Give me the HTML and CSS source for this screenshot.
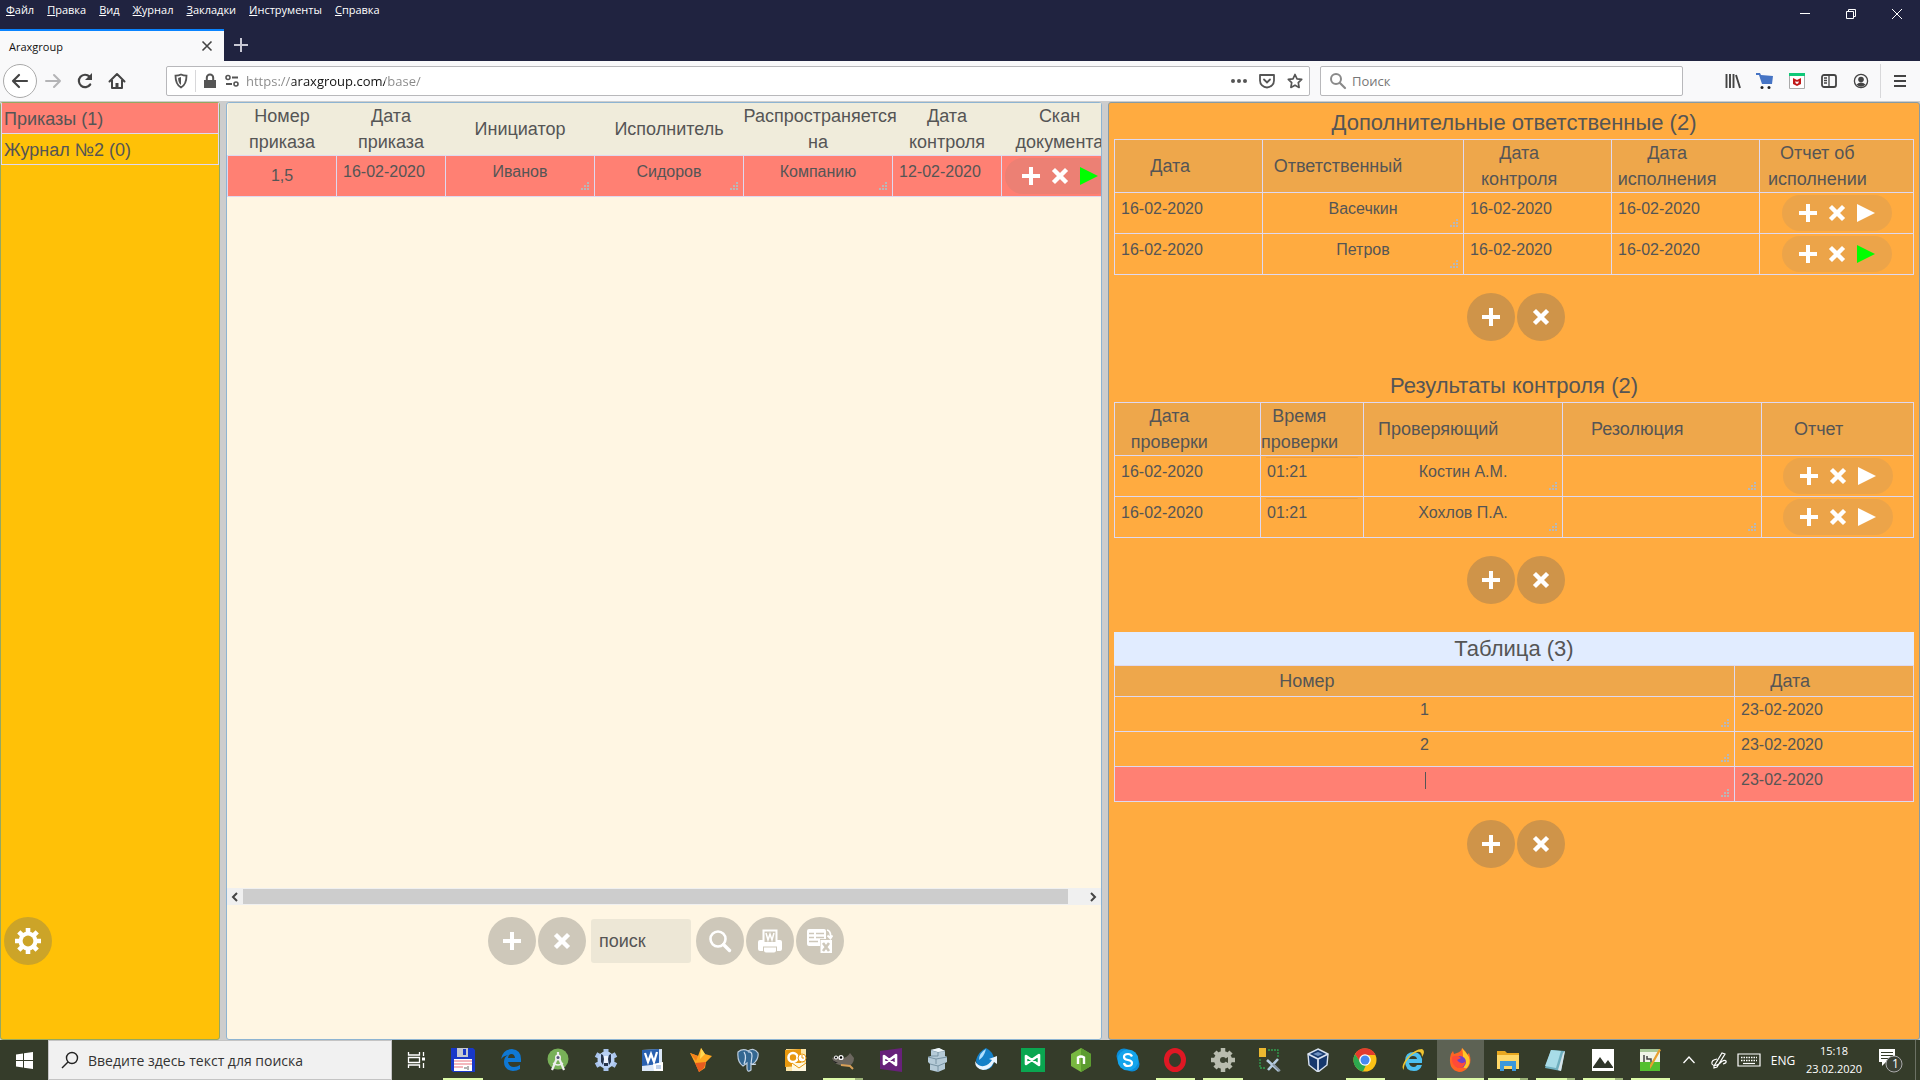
FILE: index.html
```html
<!DOCTYPE html>
<html lang="ru">
<head>
	<meta charset="UTF-8">
	<title>Araxgroup</title>
	<link rel="stylesheet" href="styles.css">
</head>
<body>
	<svg class="defs" aria-hidden="true">
		<symbol id="plus" viewBox="0 0 20 20"><path d="M8 1h4v7h7v4h-7v7H8v-7H1V8h7z" fill="currentColor"/></symbol>
		<symbol id="cross" viewBox="0 0 20 20"><path d="M5 5l10 10M15 5L5 15" stroke="currentColor" stroke-width="4.4" stroke-linecap="square"/></symbol>
		<symbol id="play" viewBox="0 0 20 20"><path d="M1 1l18 9-18 9z" fill="currentColor"/></symbol>
	</svg>

	<header class="browser">
		<div class="titlebar">
			<nav class="menu">
				<a href="#"><u>Ф</u>айл</a>
				<a href="#"><u>П</u>равка</a>
				<a href="#"><u>В</u>ид</a>
				<a href="#"><u>Ж</u>урнал</a>
				<a href="#"><u>З</u>акладки</a>
				<a href="#"><u>И</u>нструменты</a>
				<a href="#"><u>С</u>правка</a>
			</nav>
			<div class="window-buttons">
				<button type="button" aria-label="Свернуть"><svg width="12" height="12" viewBox="0 0 12 12"><path d="M1 5.500h10" stroke="#fff"/></svg></button>
				<button type="button" aria-label="Окно"><svg width="12" height="12" viewBox="0 0 12 12"><path d="M1.500 3.500h7v7h-7zM3.500 3V1.500h7v7H9" fill="none" stroke="#fff"/></svg></button>
				<button type="button" aria-label="Закрыть"><svg width="12" height="12" viewBox="0 0 12 12"><path d="M1 1l10 10M11 1L1 11" stroke="#fff"/></svg></button>
			</div>
		</div>
		<div class="tabs">
			<div class="tab">
				<span>Araxgroup</span>
				<button type="button" aria-label="Закрыть вкладку"><svg width="12" height="12" viewBox="0 0 12 12"><path d="M1.500 1.500l9 9M10.500 1.500l-9 9" stroke="#444" stroke-width="1.600"/></svg></button>
			</div>
			<button type="button" class="new-tab" aria-label="Новая вкладка"><svg width="14" height="14" viewBox="0 0 14 14"><path d="M7 0v14M0 7h14" stroke="#c8c8d4" stroke-width="2"/></svg></button>
		</div>
		<div class="navbar">
			<div class="nav-buttons">
				<button type="button" class="back" aria-label="Назад"><svg width="18" height="18" viewBox="0 0 18 18"><path d="M16 9H2M8 3L2 9l6 6" fill="none" stroke="#444" stroke-width="2.200" stroke-linecap="round" stroke-linejoin="round"/></svg></button>
				<button type="button" aria-label="Вперёд"><svg width="18" height="18" viewBox="0 0 18 18"><path d="M2 9h14M10 3l6 6-6 6" fill="none" stroke="#b4b4b6" stroke-width="2" stroke-linecap="round" stroke-linejoin="round"/></svg></button>
				<button type="button" aria-label="Обновить"><svg width="18" height="18" viewBox="0 0 18 18"><path d="M14.200 12.500A6.200 6.200 0 1 1 13.500 4.600" fill="none" stroke="#444" stroke-width="2.200" stroke-linecap="round"/><path d="M16 1v7H9z" fill="#444"/></svg></button>
				<button type="button" aria-label="Домой"><svg width="18" height="18" viewBox="0 0 18 18"><path d="M1.500 9.500L9 2l7.500 7.500M4 8v8h10V8" fill="none" stroke="#444" stroke-width="2" stroke-linecap="round" stroke-linejoin="round"/><path d="M7.500 11h3v5h-3z" fill="#444"/></svg></button>
			</div>
			<div class="field url">
				<svg width="16" height="16" viewBox="0 0 16 16"><path d="M8 1.500c2 1 4 1.200 5.500 1.200 0 6-1.500 9.500-5.500 11.800C4 12.200 2.500 8.700 2.500 2.700 4 2.700 6 2.500 8 1.500z" fill="none" stroke="#555" stroke-width="1.800"/><path d="M8 4v8C5.800 10.200 5.200 8 5.100 4.900z" fill="#555"/></svg>
				<i class="split"></i>
				<svg width="16" height="16" viewBox="0 0 16 16"><path d="M2 7h12v8H2z" fill="#555"/><path d="M4.800 7V4.800a3.200 3.200 0 0 1 6.400 0V7" fill="none" stroke="#555" stroke-width="2"/></svg>
				<svg width="16" height="16" viewBox="0 0 16 16"><circle cx="4" cy="4.500" r="2" fill="none" stroke="#555" stroke-width="1.600"/><circle cx="12" cy="11" r="2" fill="none" stroke="#555" stroke-width="1.600"/><path d="M8 4.500h6M2 11h6" stroke="#555" stroke-width="1.800"/></svg>
				<input type="text" class="address" aria-label="Адрес" value="https://araxgroup.com/base/">
				<svg width="16" height="16" viewBox="0 0 16 16"><g fill="#555"><circle cx="2" cy="8" r="2"/><circle cx="8" cy="8" r="2"/><circle cx="14" cy="8" r="2"/></g></svg>
				<svg width="16" height="16" viewBox="0 0 16 16"><path d="M1 2h14v5.500a7 7 0 0 1-14 0z" fill="none" stroke="#555" stroke-width="1.800" stroke-linejoin="round"/><path d="M5 6.500l3 3 3-3" fill="none" stroke="#555" stroke-width="1.800" stroke-linecap="round"/></svg>
				<svg width="16" height="16" viewBox="0 0 16 16"><path d="M8 1.500l2 4.300 4.700.6-3.400 3.300.8 4.700L8 12.200l-4.100 2.200.8-4.700L1.300 6.400 6 5.800z" fill="none" stroke="#555" stroke-width="1.700" stroke-linejoin="round"/></svg>
			</div>
			<div class="field search">
				<svg width="18" height="18" viewBox="0 0 18 18"><circle cx="7" cy="7" r="5" fill="none" stroke="#8a8a8a" stroke-width="2"/><path d="M11 11l5 5" stroke="#8a8a8a" stroke-width="2.200" stroke-linecap="round"/></svg>
				<input type="text" aria-label="Поиск в интернете" placeholder="Поиск">
			</div>
			<div class="toolbar-buttons">
				<button type="button" aria-label="Библиотека"><svg width="16" height="16" viewBox="0 0 16 16"><path d="M1.500 1v14M5 1v14M8.500 1v14M11 2l4 13" stroke="#444" stroke-width="1.900"/></svg></button>
				<button type="button" aria-label="Корзина"><svg width="18" height="18" viewBox="0 0 18 18"><path d="M0 1h4l1 2 12 1-1 8H6L3 3H0z" fill="#4674c4"/><circle cx="6" cy="15.500" r="1.500" fill="#222"/><circle cx="13" cy="15.500" r="1.500" fill="#222"/></svg></button>
				<button type="button" aria-label="WebAdvisor"><svg width="16" height="16" viewBox="0 0 16 16"><path d="M.5.5h15v15H.5z" fill="#fff" stroke="#aaa"/><path d="M0 0h16v3H0z" fill="#10c878"/><path d="M4 5l4 2 4-2v6l-4 2-4-2z" fill="#c01818"/><path d="M6.500 8l1.500 1 1.500-1v2L8 11l-1.500-1z" fill="#fff"/></svg></button>
				<button type="button" aria-label="Боковая панель"><svg width="16" height="16" viewBox="0 0 16 16"><rect x="1" y="2" width="14" height="12" rx="2" fill="none" stroke="#444" stroke-width="1.800"/><path d="M8 2v12M3 5h3M3 7.500h3M3 10h3" stroke="#444" stroke-width="1.300"/></svg></button>
				<button type="button" aria-label="Аккаунт"><svg width="16" height="16" viewBox="0 0 16 16"><circle cx="8" cy="8" r="6.600" fill="none" stroke="#444" stroke-width="1.300"/><circle cx="8" cy="6.500" r="2.800" fill="#444"/><path d="M3.500 11.500Q8 7.500 12.500 11.500Q8 16 3.500 11.500z" fill="#444"/></svg></button>
				<i class="split"></i>
				<button type="button" aria-label="Меню"><svg width="14" height="14" viewBox="0 0 14 14"><path d="M1 2h12M1 7h12M1 12h12" stroke="#444" stroke-width="2"/></svg></button>
			</div>
		</div>
	</header>

	<main class="workspace">
		<aside class="panel journals">
			<ul>
				<li class="selected"><a href="#">Приказы (1)</a></li>
				<li><a href="#">Журнал №2 (0)</a></li>
			</ul>
			<button type="button" class="round" aria-label="Настройки">
				<svg width="28" height="28" viewBox="0 0 28 28"><path d="M14 1v26M1 14h26M4.800 4.800l18.400 18.400M23.200 4.800L4.800 23.200" stroke="#fff" stroke-width="4.600"/><circle cx="14" cy="14" r="9.500" fill="#fff"/><circle cx="14" cy="14" r="5.400" fill="#cca428"/></svg>
			</button>
		</aside>

		<section class="panel orders">
			<div class="scroll-area">
				<table>
					<colgroup><col class="c109"><col class="c109"><col class="c149"><col class="c149"><col class="c149"><col class="c109"><col class="c116"></colgroup>
					<thead>
						<tr>
							<th>Номер приказа</th>
							<th>Дата приказа</th>
							<th>Инициатор</th>
							<th>Исполнитель</th>
							<th>Распространяется на</th>
							<th>Дата контроля</th>
							<th>Скан документа</th>
						</tr>
					</thead>
					<tbody>
						<tr class="selected">
							<td class="number">1,5</td>
							<td class="date">16-02-2020</td>
							<td class="text"><textarea aria-label="Инициатор">Иванов</textarea></td>
							<td class="text"><textarea aria-label="Исполнитель">Сидоров</textarea></td>
							<td class="text"><textarea aria-label="Распространяется на">Компанию</textarea></td>
							<td class="date">12-02-2020</td>
							<td>
								<div class="pill">
									<button type="button" aria-label="Добавить"><svg><use href="#plus"/></svg></button>
									<button type="button" aria-label="Удалить"><svg><use href="#cross"/></svg></button>
									<button type="button" class="ready" aria-label="Открыть"><svg><use href="#play"/></svg></button>
								</div>
							</td>
						</tr>
					</tbody>
				</table>
			</div>
			<div class="scrollbar">
				<button type="button" aria-label="Влево"><svg width="8" height="10" viewBox="0 0 8 10"><path d="M6 1L2 5l4 4" fill="none" stroke="#444" stroke-width="2"/></svg></button>
				<div class="track"><div class="thumb"></div></div>
				<button type="button" aria-label="Вправо"><svg width="8" height="10" viewBox="0 0 8 10"><path d="M2 1l4 4-4 4" fill="none" stroke="#444" stroke-width="2"/></svg></button>
			</div>
			<div class="tools">
				<button type="button" class="round" aria-label="Добавить"><svg><use href="#plus"/></svg></button>
				<button type="button" class="round" aria-label="Удалить"><svg><use href="#cross"/></svg></button>
				<input type="text" aria-label="Поиск по журналу" placeholder="поиск">
				<button type="button" class="round" aria-label="Найти"><svg width="24" height="24" viewBox="0 0 24 24"><circle cx="10" cy="10" r="7.500" fill="none" stroke="#fff" stroke-width="2.600"/><path d="M15.500 15.500l6 6" stroke="#fff" stroke-width="3.400" stroke-linecap="round"/></svg></button>
				<button type="button" class="round" aria-label="Печать в Word"><svg width="24" height="24" viewBox="0 0 24 24"><path d="M4.500.5h15V15h-15z" fill="#fff"/><path d="M6.500 2.500h11V13h-11z" fill="#cec8ba"/><path d="M8 4l2 7 2-6 2 6 2-7" fill="none" stroke="#fff" stroke-width="1.500"/><path d="M2 11h3v4h14v-4h3q2 0 2 2v7q0 2-2 2H2q-2 0-2-2v-7q0-2 2-2z" fill="#fff"/><path d="M5 17.500h14V23H5z" fill="#cec8ba"/><path d="M6 18.500h12v3q0 2-2 2H8q-2 0-2-2z" fill="#fff"/></svg></button>
				<button type="button" class="round" aria-label="Выгрузить в Excel"><svg width="26" height="26" viewBox="0 0 26 26"><path d="M2 1h15q2 0 2 2v8h-6v7H2q-2 0-2-2V3q0-2 2-2z" fill="#fff"/><path d="M2 5.500h5M9 5.500h8M2 9.500h5M9 9.500h8M2 13.500h9" stroke="#cec8ba" stroke-width="1.600"/><path d="M20 2q4 1 3.500 7M20.500 7.500l3 3 2-3" fill="none" stroke="#fff" stroke-width="1.800"/><path d="M13.500 12H25v13H13.500z" fill="#fff"/><path d="M16 15l6 8M22 15l-6 8" stroke="#cec8ba" stroke-width="2.600"/></svg></button>
			</div>
		</section>

		<section class="panel details">
			<section class="block">
				<h2>Дополнительные ответственные (2)</h2>
				<table>
					<colgroup><col class="c148"><col class="c201"><col class="c148"><col class="c148"><col class="c154"></colgroup>
					<thead>
						<tr>
							<th><span>Дата</span></th>
							<th><span>Ответственный</span></th>
							<th><span>Дата контроля</span></th>
							<th><span>Дата исполнения</span></th>
							<th><span>Отчет об исполнении</span></th>
						</tr>
					</thead>
					<tbody>
						<tr>
							<td class="date">16-02-2020</td>
							<td class="text"><textarea aria-label="Ответственный">Васечкин</textarea></td>
							<td class="date">16-02-2020</td>
							<td class="date">16-02-2020</td>
							<td>
								<div class="pill">
									<button type="button" aria-label="Добавить"><svg><use href="#plus"/></svg></button>
									<button type="button" aria-label="Удалить"><svg><use href="#cross"/></svg></button>
									<button type="button" aria-label="Открыть"><svg><use href="#play"/></svg></button>
								</div>
							</td>
						</tr>
						<tr>
							<td class="date">16-02-2020</td>
							<td class="text"><textarea aria-label="Ответственный">Петров</textarea></td>
							<td class="date">16-02-2020</td>
							<td class="date">16-02-2020</td>
							<td>
								<div class="pill">
									<button type="button" aria-label="Добавить"><svg><use href="#plus"/></svg></button>
									<button type="button" aria-label="Удалить"><svg><use href="#cross"/></svg></button>
									<button type="button" class="ready" aria-label="Открыть"><svg><use href="#play"/></svg></button>
								</div>
							</td>
						</tr>
					</tbody>
				</table>
				<div class="actions">
					<button type="button" class="round" aria-label="Добавить"><svg><use href="#plus"/></svg></button>
					<button type="button" class="round" aria-label="Удалить"><svg><use href="#cross"/></svg></button>
				</div>
			</section>

			<section class="block">
				<h2>Результаты контроля (2)</h2>
				<table>
					<colgroup><col class="c146"><col class="c103"><col class="c199"><col class="c199"><col class="c152"></colgroup>
					<thead>
						<tr>
							<th><span>Дата проверки</span></th>
							<th><span>Время проверки</span></th>
							<th><span>Проверяющий</span></th>
							<th><span>Резолюция</span></th>
							<th><span>Отчет</span></th>
						</tr>
					</thead>
					<tbody>
						<tr>
							<td class="date">16-02-2020</td>
							<td class="date time">01:21</td>
							<td class="text"><textarea aria-label="Проверяющий">Костин А.М.</textarea></td>
							<td class="text"><textarea aria-label="Резолюция"></textarea></td>
							<td>
								<div class="pill">
									<button type="button" aria-label="Добавить"><svg><use href="#plus"/></svg></button>
									<button type="button" aria-label="Удалить"><svg><use href="#cross"/></svg></button>
									<button type="button" aria-label="Открыть"><svg><use href="#play"/></svg></button>
								</div>
							</td>
						</tr>
						<tr>
							<td class="date">16-02-2020</td>
							<td class="date time">01:21</td>
							<td class="text"><textarea aria-label="Проверяющий">Хохлов П.А.</textarea></td>
							<td class="text"><textarea aria-label="Резолюция"></textarea></td>
							<td>
								<div class="pill">
									<button type="button" aria-label="Добавить"><svg><use href="#plus"/></svg></button>
									<button type="button" aria-label="Удалить"><svg><use href="#cross"/></svg></button>
									<button type="button" aria-label="Открыть"><svg><use href="#play"/></svg></button>
								</div>
							</td>
						</tr>
					</tbody>
				</table>
				<div class="actions">
					<button type="button" class="round" aria-label="Добавить"><svg><use href="#plus"/></svg></button>
					<button type="button" class="round" aria-label="Удалить"><svg><use href="#cross"/></svg></button>
				</div>
			</section>

			<section class="block compact">
				<h2>Таблица (3)</h2>
				<table>
					<colgroup><col class="c620"><col class="c179"></colgroup>
					<thead>
						<tr>
							<th><span>Номер</span></th>
							<th><span>Дата</span></th>
						</tr>
					</thead>
					<tbody>
						<tr>
							<td class="text"><textarea aria-label="Номер">1</textarea></td>
							<td class="date">23-02-2020</td>
						</tr>
						<tr>
							<td class="text"><textarea aria-label="Номер">2</textarea></td>
							<td class="date">23-02-2020</td>
						</tr>
						<tr class="selected">
							<td class="text editing"><textarea aria-label="Номер"></textarea></td>
							<td class="date">23-02-2020</td>
						</tr>
					</tbody>
				</table>
				<div class="actions">
					<button type="button" class="round" aria-label="Добавить"><svg><use href="#plus"/></svg></button>
					<button type="button" class="round" aria-label="Удалить"><svg><use href="#cross"/></svg></button>
				</div>
			</section>
		</section>
	</main>

	<footer class="taskbar">
		<button type="button" class="start" aria-label="Пуск"><svg width="17" height="17" viewBox="0 0 17 17"><path d="M0 2.400l7-1V8H0zM8 1.200L17 0v8H8zM0 9h7v6.600l-7-1zM8 9h9v8l-9-1.200z" fill="#fff"/></svg></button>
		<label class="task-search">
			<svg width="18" height="18" viewBox="0 0 18 18"><circle cx="11" cy="7" r="5.500" fill="none" stroke="#222" stroke-width="1.400"/><path d="M7 11l-6 6" stroke="#222" stroke-width="1.400"/></svg>
			<input type="text" aria-label="Поиск в системе" placeholder="Введите здесь текст для поиска">
		</label>
		<div class="apps">
			<button type="button" aria-label="Представление задач"><svg viewBox="0 0 24 24"><path d="M4.500 4v3h11V4M4.500 20v-3h11v3M4.500 9.500h11v5h-11zM19.500 4v4M19.500 15v5" fill="none" stroke="#fff" stroke-width="1.300"/><path d="M18 9.500h3v3h-3z" fill="#fff"/></svg></button>
			<button type="button" class="open" aria-label="Total Commander"><svg viewBox="0 0 24 24"><path d="M0 0h22l2 2v22H2l-2-2z" fill="#1838c8"/><path d="M6 0h11v9H6z" fill="#c4c8d0"/><path d="M12 1h3v6h-3z" fill="#1838c8"/><path d="M3 11h18v12H3z" fill="#fff"/><path d="M3 13h18M3 16h18M3 19h9" stroke="#f0a0a8" stroke-width="1.500"/><path d="M13 20h3M17 18v4" stroke="#666"/></svg></button>
			<button type="button" aria-label="Edge"><svg viewBox="0 0 24 24"><path d="M2 11Q4 1 13 1q9 1 9 10v3H9q1 5 6 5 3 0 6-2v4q-3 2-7 2-9-1-9-9 0-5 4-7-5 1-7 4zM9 10h7q-.5-4-3.500-4T9 10z" fill="#0f78d4"/></svg></button>
			<button type="button" aria-label="Android Studio"><svg viewBox="0 0 24 24"><circle cx="12" cy="11" r="10.500" fill="#78b058"/><path d="M12 4v4M11 10L6 22M13 10l5 12" stroke="#eee" stroke-width="2.200"/><circle cx="12" cy="9.500" r="3" fill="#eee"/><circle cx="12" cy="9.500" r="1.500" fill="#557"/><path d="M7 15q5 4 10 0" fill="none" stroke="#eee" stroke-width="1.500"/></svg></button>
			<button type="button" aria-label="Редактор"><svg viewBox="0 0 24 24"><path d="M12 1v22M2 6.500l20 11M22 6.500l-20 11" stroke="#a9c4ec" stroke-width="5"/><circle cx="12" cy="12" r="8.500" fill="#b8d0f4"/><path d="M7 6l2 1 1 4-1 6-2-3zM17 6l-2 1-1 4 1 6 2-3zM10 15h4v3h-4z" fill="#26344c"/><path d="M10 8h4v7h-4z" fill="#eef4ff"/></svg></button>
			<button type="button" aria-label="Word"><svg viewBox="0 0 24 24"><path d="M1 2l20-1v22H1z" fill="#dce8f8"/><path d="M1 2l17-1v15L1 18z" fill="#2860b0"/><path d="M4 5l3 9 3-8 3 8 3-10" fill="none" stroke="#fff" stroke-width="2.200"/><path d="M12 16l10-2v9H13z" fill="#fff"/><path d="M15 18h5M15 20h5" stroke="#7a9fd4"/></svg></button>
			<button type="button" aria-label="FoxPro"><svg viewBox="0 0 24 24"><path d="M1 5l8 3 3-8 4 6 7 2-6 6-1 6-6 4-3-7z" fill="#ffa820"/><path d="M6 15l11-1-2 6-5 4z" fill="#e85c20"/><path d="M12 0l4 6-5 5z" fill="#ffd850"/><path d="M1 5l8 3-2 5z" fill="#f4801c"/></svg></button>
			<button type="button" aria-label="PostgreSQL"><svg viewBox="0 0 24 24"><path d="M2 4q5-4 10-1 6-4 10 2 1 6-5 11h-2v6q-4 3-4-2v-5l-4 3Q1 14 2 4z" fill="#336791" stroke="#bcd" stroke-width="1.200"/><path d="M8 4q3 5 0 12M12 4q4-1 4 4l-1 8M15 16q3 1 5 0" fill="none" stroke="#cde" stroke-width="1.200"/></svg></button>
			<button type="button" aria-label="Outlook"><svg viewBox="0 0 24 24"><path d="M2 1h20v22H2z" fill="#fbe5a8"/><path d="M1 2l16-1v17L1 19z" fill="#e8980e"/><circle cx="9" cy="9.500" r="4.500" fill="none" stroke="#fff" stroke-width="2.600"/><path d="M8 15h14v8H8z" fill="#fff8e0"/><circle cx="18" cy="10" r="4" fill="#fff" stroke="#e8980e"/><path d="M18 7v3h2M8 15l7 5 7-5" fill="none" stroke="#e8980e"/></svg></button>
			<button type="button" class="open stacked" aria-label="GIMP"><svg viewBox="0 0 24 24"><path d="M1 10q4-3 10 0 5 0 8-5l4 5q0 7-7 8Q3 18 1 10z" fill="#6c675f"/><circle cx="5" cy="9.500" r="2" fill="#fff"/><circle cx="10" cy="9.500" r="2.600" fill="#fff"/><circle cx="10" cy="9.500" r="1.200"/><circle cx="5" cy="9.500" r="1"/><path d="M10 17l9 1 3 3" fill="none" stroke="#d8a058" stroke-width="2"/><path d="M1 12l3 3h3z" fill="#222"/></svg></button>
			<button type="button" aria-label="Visual Studio"><svg viewBox="0 0 24 24"><path d="M1 3l22-3v24L1 21z" fill="#68217a"/><path d="M5 8v8l12-9v10z" fill="none" stroke="#fff" stroke-width="2.600" stroke-linejoin="round"/></svg></button>
			<button type="button" aria-label="Базы данных"><svg viewBox="0 0 24 24"><path d="M5 2l8-2 6 3v5l2 1v5l-2 1v6l-7 3-8-2v-6l-2-2V9l3-1z" fill="#b5cbd8"/><path d="M5 2l7 2 7-1M12 4v4l-7 0M2 9l8 2 11-2M10 11v5M4 16l8 2 7-3M12 18v6" fill="none" stroke="#7894a4"/><path d="M5 2l8-2 6 3-7 1z" fill="#eef6fa"/></svg></button>
			<button type="button" aria-label="Обозреватель данных"><svg viewBox="0 0 24 24"><path d="M12 0q8 4 8 12 0 9-9 10-9-1-9-10Q4 4 12 0z" fill="#1480c8"/><path d="M12 1Q5 5 5 12q5-3 7-11z" fill="#b0e0ff"/><path d="M1 13q3 6 9 5 5-1 8-6l-3-1 8-3v8l-3-2q-4 8-11 8Q1 21 1 13z" fill="#e8f4ff"/></svg></button>
			<button type="button" aria-label="Visual Studio Express"><svg viewBox="0 0 24 24"><path d="M0 0h24v24H0z" fill="#0aa650"/><path d="M5 8v8l13-9v10z" fill="none" stroke="#fff" stroke-width="2.600" stroke-linejoin="round"/></svg></button>
			<button type="button" aria-label="Node.js"><svg viewBox="0 0 24 24"><path d="M12 0l10 6v12l-10 6-10-6V6z" fill="#78b840"/><path d="M12 0l10 6v12l-10 6z" fill="#5c9c30"/><path d="M9 16V9.500q3-2 6 0V16" fill="none" stroke="#fff" stroke-width="2.400"/></svg></button>
			<button type="button" aria-label="Skype"><svg viewBox="0 0 24 24"><circle cx="8" cy="8" r="7.500" fill="#0a8cd8"/><circle cx="16" cy="16" r="7.500" fill="#0a8cd8"/><circle cx="12" cy="12" r="10.500" fill="#13a4ec"/><path d="M16 8.500Q15 6 12 6q-4 0-4 3 0 2.300 4 3t4 3q0 3-4 3-3.500 0-4-3" fill="none" stroke="#fff" stroke-width="2.200"/></svg></button>
			<button type="button" class="open" aria-label="Opera"><svg viewBox="0 0 24 24"><ellipse cx="12" cy="12" rx="8.500" ry="9.500" fill="none" stroke="#e01824" stroke-width="5"/></svg></button>
			<button type="button" class="open" aria-label="Службы"><svg viewBox="0 0 24 24"><path d="M12 0v24M0 12h24M4 4l16 16M20 4L4 20" stroke="#b8bcae" stroke-width="4.500"/><circle cx="12" cy="12" r="9" fill="#b8bcae"/><circle cx="12" cy="12" r="3" fill="#3b4231"/><path d="M12 12l5-3v6z" fill="#3b4231"/></svg></button>
			<button type="button" aria-label="Конфигуратор"><svg viewBox="0 0 24 24"><path d="M1 0h7v9H1z" fill="#ecb830"/><path d="M10 2h10v8M2 11v9h6" fill="none" stroke="#30a050" stroke-width="1.300" stroke-dasharray="2 1"/><path d="M9 12l12 11M20 11L10 22" stroke="#b5cce0" stroke-width="2.600"/><path d="M15 16l7 7" stroke="#8898a4" stroke-width="2"/></svg></button>
			<button type="button" aria-label="VirtualBox"><svg viewBox="0 0 24 24"><path d="M12 1l10 5-1 11-9 7-9-7L2 6z" fill="#16386c" stroke="#d8e2f0" stroke-width="1.400"/><path d="M2 6l10 5 10-5M12 11v12" fill="none" stroke="#d8e2f0" stroke-width="1.800"/><path d="M7 6l5-2 5 2-5 2z" fill="#6f91c0"/></svg></button>
			<button type="button" class="open" aria-label="Chrome"><svg viewBox="0 0 24 24"><circle cx="12" cy="12" r="11.500" fill="#fbc116"/><path d="M2 6.200A11.500 11.500 0 0 1 22.500 7H12L7 14z" fill="#e33b2e"/><path d="M2 6.200L8 15l5 2-3 6.400A11.500 11.500 0 0 1 2 6.200z" fill="#2da94f"/><circle cx="12" cy="12" r="5.800" fill="#fff"/><circle cx="12" cy="12" r="4.500" fill="#4688f1"/></svg></button>
			<button type="button" aria-label="Internet Explorer"><svg viewBox="0 0 24 24"><path d="M21 15H8q1 4 5 4 2 0 3-2h5q-2 6-8 6-9 0-9-10 0-9 9-9 9 1 8 11zM8 11h8q-.5-3-4-3-3 0-4 3z" fill="#4cc0f0"/><path d="M3 22q-4-3 3-12Q14 1 21 1q4 2 0 8 0-6-5-5-6 2-11 10-3 5-2 8z" fill="#f0c430"/></svg></button>
			<button type="button" class="open active" aria-label="Firefox"><svg viewBox="0 0 24 24"><path d="M2 10q0-4 3-7l1 3 3-1q4-1 5-5l4 4 1 3 2-2q3 8 0 13-4 6-10 6-10-2-9-14z" fill="#ff6424"/><path d="M14 0l5 6 2 3q2 6-2 11-4 1-5-4 2-8 0-16z" fill="#ffc828"/><circle cx="12" cy="14" r="6" fill="#7040c8"/><path d="M4 9q5-3 9 1l-4 2q4 6 9 1-2 8-8 7-7-3-6-11z" fill="#ff4a38"/></svg></button>
			<button type="button" class="open stacked" aria-label="Проводник"><svg viewBox="0 0 24 24"><path d="M1 3h8l2 2h12v16H1z" fill="#e8a820"/><path d="M1 7h22v14H1z" fill="#ffd868"/><path d="M4 13h16v10h-4v-5H8v5H4z" fill="#3c98dc"/></svg></button>
			<button type="button" class="open stacked" aria-label="Блокнот"><svg viewBox="0 0 24 24"><path d="M8 2l14 1-4 20-16-3z" fill="#6eaebe"/><path d="M8 2l10 1-5 17-11-2z" fill="#a8dce8"/><path d="M20 5l2-2-4 20-3-1z" fill="#d8e4e8"/></svg></button>
			<button type="button" class="open stacked" aria-label="Фотографии"><svg viewBox="0 0 24 24"><path d="M1 1h22v22H1z" fill="#fff"/><path d="M2 19l7-10 5 7 3-4 5 7v1H2z" fill="#30362a"/></svg></button>
			<button type="button" class="open" aria-label="Notepad++"><svg viewBox="0 0 24 24"><path d="M2 1h20v22H2z" fill="#f0f4e8"/><path d="M2 14h20v9H2z" fill="#54c030"/><path d="M2 1h20v3H2z" fill="#a8c898"/><path d="M6 7v7M9 8v3h4v3" stroke="#444" fill="none" stroke-width="1.500"/><path d="M23 2L14 18l-2 3v-4L21 1z" fill="#e8a030"/></svg></button>
		</div>
		<div class="tray">
			<button type="button" aria-label="Скрытые значки"><svg width="14" height="14" viewBox="0 0 14 14"><path d="M1.500 10L7 4l5.500 6" fill="none" stroke="#fff" stroke-width="1.300"/></svg></button>
			<button type="button" aria-label="Перо"><svg width="18" height="18" viewBox="0 0 18 18"><path d="M4 15L12 2l3 1-8 13-3 1zM7 8q-6 1-5 5 2 3 7 0 5-5 7-3 1 2-3 3" fill="none" stroke="#fff" stroke-width="1.200"/></svg></button>
			<button type="button" aria-label="Клавиатура"><svg width="24" height="16" viewBox="0 0 24 16"><path d="M1 2h22v12H1z" fill="none" stroke="#fff" stroke-width="1.200"/><path d="M4 5.500h16M4 8.500h16" stroke="#fff" stroke-width="1.300" stroke-dasharray="1.500 1"/><path d="M6 11.500h12" stroke="#fff" stroke-width="1.200"/></svg></button>
			<button type="button" class="lang">ENG</button>
			<button type="button" class="clock"><span>15:18</span><span>23.02.2020</span></button>
			<button type="button" class="notices" aria-label="Уведомления"><svg width="26" height="28" viewBox="0 0 26 28"><path d="M1 3h16v13H8l-4 4v-4H1z" fill="#fff"/><path d="M3 6.500h12M3 9.500h12M3 12.500h7" stroke="#353c2a" stroke-width="1.200"/><circle cx="16" cy="18" r="8" fill="#3b4035" stroke="#aaa"/></svg><b>1</b></button>
		</div>
	</footer>
</body>
</html>
```
FILE: styles.css
```css
* {
	box-sizing: border-box;
}
body {
	font-family: "Liberation Sans", Arial, sans-serif;
	color: #555;
	background-color: #cdcdcd;
	margin: 0;
	min-height: 100vh;
	display: flex;
	flex-direction: column;
}
a {
	color: inherit;
	text-decoration: none;
}
button {
	display: flex;
	align-items: center;
	justify-content: center;
	padding: 0;
	border: none;
	background: none;
	color: #fff;
	font-family: inherit;
	cursor: pointer;
}
input, textarea {
	font-family: inherit;
	border: none;
	outline: none;
	background: none;
	padding: 0;
	min-width: 0;
}
svg {
	display: block;
	flex-shrink: 0;
}
.defs {
	display: none;
}

/* browser window */
.browser {
	font-family: "Open Sans", sans-serif;
	font-size: 11px;
	background-color: #202340;
	color: #fff;
}
.titlebar {
	display: flex;
	justify-content: space-between;
	height: 29px;
}
.menu {
	display: flex;
	gap: 13px;
	padding: 0 6px;
	line-height: 20px;
}
.window-buttons {
	display: flex;
}
.window-buttons button {
	width: 46px;
	height: 28px;
}
.tabs {
	display: flex;
	height: 32px;
}
.tab {
	display: flex;
	align-items: center;
	justify-content: space-between;
	width: 224px;
	padding: 0 11px 0 9px;
	border-top: 2px solid #0a84ff;
	background-color: #f9f9fa;
	color: #111;
}
.new-tab {
	width: 34px;
}
.navbar {
	display: flex;
	align-items: center;
	height: 40px;
	padding: 0 4px 0 3px;
	background-color: #f9f9fa;
}
.nav-buttons {
	display: flex;
	align-items: center;
	width: 163px;
}
.nav-buttons button {
	width: 32px;
	height: 32px;
}
.nav-buttons .back {
	width: 34px;
	height: 34px;
	border: 1px solid #aaa;
	border-radius: 50%;
	background-color: #fff;
}
.field {
	display: flex;
	align-items: center;
	height: 30px;
	border: 1px solid #b8b8bb;
	border-radius: 2px;
	background-color: #fff;
}
.field input {
	flex: 1;
	font-size: 13px;
}
.url {
	flex: 1;
	gap: 6px;
	padding: 0 6px;
}
.url svg:nth-of-type(n+4) {
	margin-left: 6px;
}
.url .address {
	height: 28px;
	color: transparent;
	background: linear-gradient(90deg, #888 46px, #111 46px, #111 139px, #888 139px);
	-webkit-background-clip: text;
	background-clip: text;
}
.split {
	width: 1px;
	height: 22px;
	background-color: #d8d8da;
}
.search {
	width: 363px;
	gap: 5px;
	margin: 0 34px 0 10px;
	padding: 0 8px;
}
.field input::placeholder {
	color: #777;
}
.toolbar-buttons {
	display: flex;
	align-items: center;
}
.toolbar-buttons button {
	width: 32px;
	height: 32px;
}
.toolbar-buttons .split {
	height: 34px;
	margin: 0 3px;
}

/* workspace */
.workspace {
	flex: 1;
	display: grid;
	grid-template-columns: 220fr 876fr 812fr;
	gap: 6px;
	border-top: 1px solid #cdcdcd;
}
.panel {
	display: flex;
	flex-direction: column;
	min-width: 0;
	border: 1px solid #8eb4d2;
	border-radius: 3px;
}
.round {
	width: 48px;
	height: 48px;
	border-radius: 50%;
}
.pill svg, .round svg:not([width]) {
	width: 20px;
	height: 20px;
}
.selected {
	background-color: #ff8073;
}

/* list of journals */
.journals {
	justify-content: space-between;
	padding-bottom: 74px;
	background-color: #ffc107;
	border-color: #93a862;
}
.journals ul {
	list-style: none;
	margin: 0;
	padding: 0;
	font-size: 18px;
}
.journals li {
	height: 31px;
	padding-left: 2px;
	border: 1px solid #ded9f0;
	border-top: none;
	line-height: 32px;
}
.journals .round {
	margin-left: 3px;
	background-color: #cca428;
}

/* tables */
table {
	width: 100%;
	table-layout: fixed;
	border-collapse: collapse;
}
th {
	padding: 0;
	font-size: 18px;
	font-weight: normal;
	line-height: 26px;
}
td {
	position: relative;
	height: 41px;
	padding: 0;
	border: 1px solid #ded9f0;
	font-size: 16px;
	line-height: 18px;
}
td textarea {
	display: block;
	width: 100%;
	height: 40px;
	padding-top: 7px;
	resize: none;
	overflow: hidden;
	font-size: 16px;
	line-height: 18px;
	text-align: center;
	color: inherit;
}
.text::after {
	content: "";
	position: absolute;
	right: 5px;
	bottom: 6px;
	width: 2px;
	height: 2px;
	background-color: #b8b8b8;
	box-shadow: -3px 0 #b8b8b8, -6px 0 #b8b8b8, 0 -3px #b8b8b8, -3px -3px #b8b8b8, 0 -6px #b8b8b8;
}
.date {
	padding: 7px 0 0 6px;
	vertical-align: top;
}
.time {
	background: linear-gradient(#ee9f3e, #ee9f3e) center 1px / 90% 1px no-repeat;
}
.number {
	text-align: center;
}
.pill {
	display: flex;
	align-items: center;
	justify-content: center;
	gap: 9px;
	width: 110px;
	height: 36px;
	margin: 0 auto;
	border-radius: 18px;
	background-color: rgba(128, 128, 128, 0.15);
}
.pill .ready {
	color: #0f0;
}
.c103 { width: 103px; }
.c109 { width: 109px; }
.c116 { width: 116px; }
.c146 { width: 146px; }
.c148 { width: 148px; }
.c149 { width: 149px; }
.c152 { width: 152px; }
.c154 { width: 154px; }
.c179 { width: 179px; }
.c199 { width: 199px; }
.c201 { width: 201px; }
.c620 { width: 620px; }

/* orders */
.orders {
	background-color: #fff6e3;
}
.scroll-area {
	flex: 1;
	overflow: hidden;
}
.scroll-area table {
	width: 890px;
}
.scroll-area th {
	background-color: #f0ecdb;
}
.scrollbar {
	display: flex;
	height: 17px;
	background-color: #f0f0f0;
}
.scrollbar button {
	width: 16px;
}
.track {
	flex: 1;
	padding: 1px 0;
}
.thumb {
	width: 98%;
	height: 15px;
	background-color: #cdcdcd;
}
.tools {
	display: flex;
	align-items: center;
	justify-content: center;
	gap: 2px;
	padding: 12px 0 74px 4px;
}
.tools .round {
	background-color: #cec8ba;
}
.tools input {
	width: 100px;
	height: 44px;
	margin: 0 3px;
	padding: 0 8px;
	border-radius: 3px;
	background-color: #ede7d6;
	font-size: 18px;
}
.tools input::placeholder {
	color: #555;
}

/* order details */
.details {
	padding: 3px 5px;
	background-color: #ffab40;
	border-color: #879ba4;
}
.block {
	margin-bottom: 28px;
}
h2 {
	margin: 0;
	font-size: 22px;
	font-weight: normal;
	line-height: 33px;
	text-align: center;
}
.block th {
	border: 1px solid #ded9f0;
	background-color: #eea74b;
}
.block th span {
	display: block;
	width: 75%;
}
.block .round {
	background-color: #cf9449;
}
.actions {
	display: flex;
	justify-content: center;
	gap: 2px;
	padding: 18px 0 0 4px;
}
.compact h2 {
	background-color: #e1ecff;
}
.compact th {
	height: 31px;
}
.compact th span {
	width: 62%;
}
.compact td {
	height: 35px;
}
.compact td textarea {
	height: 34px;
	padding-top: 4px;
}
.compact .date {
	padding-top: 4px;
}
.compact .text::after {
	bottom: 4px;
}
.editing::before {
	content: "";
	position: absolute;
	left: 50%;
	top: 5px;
	width: 1px;
	height: 17px;
	background-color: #555;
}

/* taskbar */
.taskbar {
	display: flex;
	height: 40px;
	background-color: #353c2a;
	font-family: "Open Sans", sans-serif;
}
.start {
	width: 48px;
}
.task-search {
	display: flex;
	align-items: center;
	gap: 9px;
	width: 344px;
	padding: 0 12px;
	border: 1px solid #c4c4c4;
	background-color: #f1f1f1;
}
.task-search input {
	flex: 1;
	font-size: 14px;
}
.task-search input::placeholder {
	color: #333;
}
.apps {
	flex: 1;
	display: flex;
}
.apps button {
	position: relative;
	flex: 1;
}
.apps svg {
	width: 24px;
	height: 24px;
}
.apps .open::after {
	content: "";
	position: absolute;
	left: 4px;
	right: 4px;
	bottom: 0;
	height: 2px;
	background-color: #dcfaa8;
}
.apps .stacked::after {
	background: linear-gradient(90deg, #dcfaa8 80%, #9cb478 80%);
}
.apps .active {
	background-color: #5d6254;
}
.apps .active::after {
	left: 0;
	right: 0;
}
.tray {
	display: flex;
	width: 246px;
	padding-right: 4px;
	font-size: 12px;
}
.tray button {
	width: 30px;
	font-size: 12px;
}
.tray .lang {
	width: 38px;
}
.tray .clock {
	flex: 1;
	flex-direction: column;
	font-size: 11px;
	line-height: 18px;
}
.tray .notices {
	position: relative;
	width: 50px;
	border-right: 1px solid #6c7164;
}
.notices b {
	position: absolute;
	left: 26px;
	top: 14px;
	font-weight: normal;
	line-height: 20px;
}
```
